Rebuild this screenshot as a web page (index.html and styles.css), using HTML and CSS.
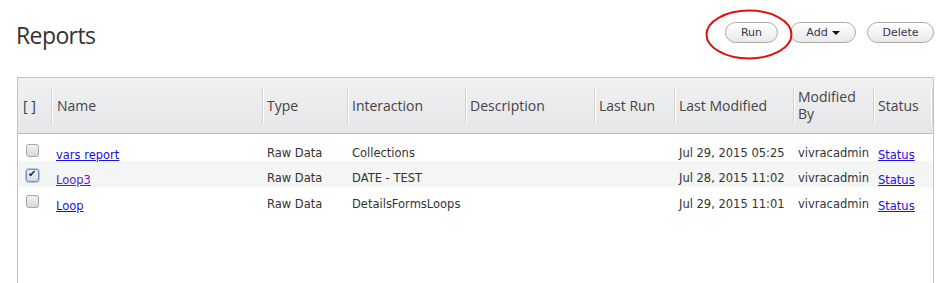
FILE: index.html
```html
<!DOCTYPE html>
<html lang="en">
<head>
  <meta charset="UTF-8">
  <title>Reports</title>
  <link rel="stylesheet" href="styles.css">
</head>
<body>

  <div class="page">
    <!-- Title and actions -->
    <div class="toolbar">
      <h1 class="title">Reports</h1>
      <div class="actions">
        <button class="btn btn-run">Run</button>
        <button class="btn btn-add">Add <span class="caret"></span></button>
        <button class="btn btn-delete">Delete</button>
      </div>
    </div>

    <!-- Reports list -->
    <div class="grid">
      <table class="reports">
        <colgroup>
          <col style="width: 33px">
          <col style="width: 211px">
          <col style="width: 85px">
          <col style="width: 118px">
          <col style="width: 129px">
          <col style="width: 80px">
          <col style="width: 119px">
          <col style="width: 80px">
          <col style="width: 60px">
        </colgroup>
        <thead>
          <tr>
            <th class="check-col">[ ]</th>
            <th class="name-col">Name</th>
            <th>Type</th>
            <th>Interaction</th>
            <th>Description</th>
            <th>Last Run</th>
            <th>Last Modified</th>
            <th>Modified<br>By</th>
            <th class="last-col">Status</th>
          </tr>
        </thead>
        <tbody>
          <tr>
            <td class="check-col"><input type="checkbox"></td>
            <td><a href="#">vars report</a></td>
            <td>Raw Data</td>
            <td>Collections</td>
            <td></td>
            <td></td>
            <td>Jul 29, 2015 05:25</td>
            <td>vivracadmin</td>
            <td><a href="#">Status</a></td>
          </tr>
          <tr class="selected">
            <td class="check-col"><input type="checkbox" checked></td>
            <td><a href="#" class="visited">Loop3</a></td>
            <td>Raw Data</td>
            <td>DATE - TEST</td>
            <td></td>
            <td></td>
            <td>Jul 28, 2015 11:02</td>
            <td>vivracadmin</td>
            <td><a href="#">Status</a></td>
          </tr>
          <tr>
            <td class="check-col"><input type="checkbox"></td>
            <td><a href="#">Loop</a></td>
            <td>Raw Data</td>
            <td>DetailsFormsLoops</td>
            <td></td>
            <td></td>
            <td>Jul 29, 2015 11:01</td>
            <td>vivracadmin</td>
            <td><a href="#">Status</a></td>
          </tr>
        </tbody>
      </table>
    </div>

    <!-- Red marker drawn round the Run button -->
    <svg class="marker" width="90" height="52" viewBox="0 0 90 52">
      <ellipse cx="44" cy="25.5" rx="42.5" ry="24" fill="none" stroke="#e01010" stroke-width="2"/>
    </svg>
  </div>

</body>
</html>
```

FILE: styles.css
```css
* {
  margin: 0;
  padding: 0;
  box-sizing: border-box;
}

body {
  font-family: 'DejaVu Sans', Verdana, sans-serif;
  background-color: #fff;
  overflow: hidden;
}

.page {
  position: relative;
  width: 952px;
}

/* Toolbar */
.toolbar {
  height: 77px;
  padding: 20px 18px 0 16px;
  display: flex;
  justify-content: space-between;
  align-items: flex-start;
}

.title {
  font-family: 'Open Sans', sans-serif;
  font-weight: 400;
  font-size: 23px;
  line-height: 30px;
  letter-spacing: -0.6px;
  color: #333;
}

.actions {
  display: flex;
  align-items: center;
  margin-top: 2px;
}

.btn {
  height: 21px;
  padding: 0;
  font-family: 'DejaVu Sans', Verdana, sans-serif;
  font-size: 11px;
  color: #34345a;
  background: linear-gradient(#ffffff, #e9e9e9);
  border: 1px solid #a9a9a9;
  border-radius: 11px;
  display: flex;
  justify-content: center;
  align-items: center;
  gap: 4px;
}

.btn-run {
  width: 53px;
}

.btn-add {
  width: 66px;
  margin-left: 12px;
}

.btn-delete {
  width: 67px;
  margin-left: 11px;
}

.caret {
  width: 0;
  height: 0;
  border-left: 4px solid transparent;
  border-right: 4px solid transparent;
  border-top: 4px solid #111;
}

/* Grid */
.grid {
  margin: 0 18px 0 17px;
  height: 230px;
  border: 1px solid #c4c4c4;
}

.reports {
  width: 100%;
  table-layout: fixed;
  border-collapse: collapse;
}

.reports th {
  height: 55px;
  padding: 0 5px;
  text-align: left;
  vertical-align: middle;
  font-family: 'Open Sans', sans-serif;
  font-weight: 400;
  font-size: 14px;
  line-height: 17px;
  color: #444;
  border-bottom: 1px solid #bcbcbc;
  background:
    linear-gradient(to right, #d3d3d3 1px, #fff 1px) no-repeat 0 10px / 2px 36px,
    linear-gradient(#f1f1f2, #e5e6e8);
}

.reports th.check-col {
  color: #2f3a5c;
  background: linear-gradient(#f1f1f2, #e5e6e8);
}

.reports th.name-col {
  padding-left: 6px;
}

.reports th.last-col {
  background:
    linear-gradient(to right, #d3d3d3 1px, #fff 1px) no-repeat 0 10px / 2px 36px,
    linear-gradient(to right, #fff 1px, #d3d3d3 1px) no-repeat 100% 10px / 2px 36px,
    linear-gradient(#f1f1f2, #e5e6e8);
}

.reports td {
  height: 26px;
  padding: 9px 5px 0;
  vertical-align: top;
  font-size: 11.5px;
  line-height: 16px;
  color: #333;
  white-space: nowrap;
}

.reports tbody tr:first-child td {
  height: 28px;
  padding-top: 11px;
}

.reports tr.selected td {
  background-color: #f4f5f5;
}

.reports a {
  font-size: 11.5px;
  line-height: 8px;
  color: #1a10e6;
  vertical-align: -2px;
}

.reports a.visited {
  color: #5a22cc;
}

/* Checkboxes */
.reports input[type="checkbox"] {
  appearance: none;
  display: block;
  width: 13px;
  height: 13px;
  margin: -1px 0 0 3px;
  border: 1px solid #a7a7a7;
  border-radius: 3px;
  background: linear-gradient(#f2f2f2, #d9d9d9);
  position: relative;
}

.reports input[type="checkbox"]:checked {
  border-color: #6c8fc4;
  box-shadow: 0 0 0 1px #a9c6ef;
}

.reports input[type="checkbox"]:checked::after {
  content: "\2714";
  position: absolute;
  left: 1px;
  top: -2px;
  font-size: 10px;
  color: #222;
}

/* Marker */
.marker {
  position: absolute;
  left: 705px;
  top: 9px;
}
```
